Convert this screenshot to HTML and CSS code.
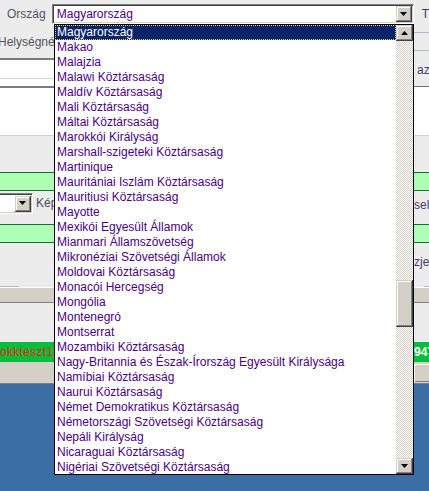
FILE: index.html
```html
<!DOCTYPE html>
<html lang="hu">
<head>
<meta charset="utf-8">
<title>Ország</title>
<link rel="stylesheet" href="styles.css">
</head>
<body>
<div class="window">
  <div class="toprow">
    <span class="lbl orszag">Ország</span>
    <div class="combo main">
      <span class="cval">Magyarország</span>
      <span class="dbtn"><svg width="7" height="4" viewBox="0 0 7 4"><polygon points="0,0 7,0 3.5,4" fill="#000"/></svg></span>
    </div>
    <span class="lbl tlbl">T</span>
  </div>

  <div class="upper">
    <div class="uleft">
      <div class="helyseg"><span class="lbl">Helységnév</span></div>
      <div class="box1"></div>
      <div class="box2"></div>
    </div>
    <div class="uright">
      <div class="rb1"></div>
      <div class="rb2"><span class="lbl">az</span></div>
      <div class="rb3"></div>
    </div>
  </div>

  <div class="gap1"></div>
  <div class="band"></div>

  <div class="split row190">
    <div class="lside">
      <div class="combo small">
        <span class="dbtn"><svg width="7" height="4" viewBox="0 0 7 4"><polygon points="0,0 7,0 3.5,4" fill="#000"/></svg></span>
      </div>
      <span class="lbl kep">Kép</span>
    </div>
    <span class="lbl rtxt">self</span>
  </div>

  <div class="band"></div>

  <div class="split row242">
    <span></span>
    <span class="lbl rtxt">zje</span>
  </div>

  <div class="line286"></div>
  <div class="bevelbar"></div>
  <div class="gap2"></div>

  <div class="status">
    <span class="red">okkteszt1</span>
    <span class="wht">947</span>
  </div>

  <div class="bottombar">
    <span class="rbtn"></span>
  </div>
</div>

<div class="listbox">
  <ul class="items">
    <li class="item sel">Magyarország</li>
    <li class="item">Makao</li>
    <li class="item">Malajzia</li>
    <li class="item">Malawi Köztársaság</li>
    <li class="item">Maldív Köztársaság</li>
    <li class="item">Mali Köztársaság</li>
    <li class="item">Máltai Köztársaság</li>
    <li class="item">Marokkói Királyság</li>
    <li class="item">Marshall-szigeteki Köztársaság</li>
    <li class="item">Martinique</li>
    <li class="item">Mauritániai Iszlám Köztársaság</li>
    <li class="item">Mauritiusi Köztársaság</li>
    <li class="item">Mayotte</li>
    <li class="item">Mexikói Egyesült Államok</li>
    <li class="item">Mianmari Államszövetség</li>
    <li class="item">Mikronéziai Szövetségi Államok</li>
    <li class="item">Moldovai Köztársaság</li>
    <li class="item">Monacói Hercegség</li>
    <li class="item">Mongólia</li>
    <li class="item">Montenegró</li>
    <li class="item">Montserrat</li>
    <li class="item">Mozambiki Köztársaság</li>
    <li class="item">Nagy-Britannia és Észak-Írország Egyesült Királysága</li>
    <li class="item">Namíbiai Köztársaság</li>
    <li class="item">Naurui Köztársaság</li>
    <li class="item">Német Demokratikus Köztársaság</li>
    <li class="item">Németországi Szövetségi Köztársaság</li>
    <li class="item">Nepáli Királyság</li>
    <li class="item">Nicaraguai Köztársaság</li>
    <li class="item">Nigériai Szövetségi Köztársaság</li>
  </ul>
  <div class="vscroll">
    <span class="sbtn"><svg width="7" height="4" viewBox="0 0 7 4"><polygon points="0,4 7,4 3.5,0" fill="#000"/></svg></span>
    <span class="track t1"></span>
    <span class="thumb"></span>
    <span class="track t2"></span>
    <span class="sbtn"><svg width="7" height="4" viewBox="0 0 7 4"><polygon points="0,0 7,0 3.5,4" fill="#000"/></svg></span>
  </div>
</div>
</body>
</html>
```

FILE: styles.css
```css
* { box-sizing: border-box; }

body {
  margin: 0;
  width: 429px;
  height: 491px;
  overflow: hidden;
  position: relative;
  background: #3a6ea5;
  font-family: "Liberation Sans", Arial, sans-serif;
  font-size: 12px;
}

.window {
  height: 384px;
  background: #ececec;
  overflow: hidden;
}

.lbl {
  color: #4a4a5c;
  line-height: 14px;
  white-space: nowrap;
}

/* top row */
.toprow {
  height: 32px;
  display: flex;
  align-items: flex-start;
  padding-left: 7px;
}
.orszag {
  width: 45px;
  margin-top: 7px;
  color: #555560;
}
.tlbl {
  margin-left: 8px;
  margin-top: 7px;
  color: #3c3c5a;
}

.combo {
  background: #fff;
  border: 1px solid;
  border-color: #808080 #fff #fff #808080;
  box-shadow: inset 1px 1px #404040, inset -1px -1px #d4d0c8;
  padding: 1px;
  display: flex;
  align-items: center;
  justify-content: space-between;
}
.combo.main {
  margin-top: 4px;
  width: 363px;
  height: 20px;
}
.cval {
  padding-left: 3px;
  color: #4b0082;
  line-height: 16px;
}
.dbtn, .sbtn {
  width: 16px;
  height: 16px;
  flex: none;
  background: #d4d0c8;
  box-shadow: inset -1px -1px #404040, inset 1px 1px #d4d0c8, inset -2px -2px #808080, inset 2px 2px #fff;
  display: flex;
  align-items: center;
  justify-content: center;
}
.dbtn svg, .sbtn svg { display: block; margin-left: -1px; margin-top: -1px; }

/* upper area (y 32-135) */
.upper {
  height: 104px;
  display: flex;
  justify-content: space-between;
}
.uleft { width: 54px; overflow: hidden; }
.helyseg {
  height: 26px;
  padding-top: 3px;
  overflow: hidden;
}
.helyseg .lbl { display: block; margin-left: -2px; color: #555560; }
.box1 {
  height: 28px;
  border-top: 2px solid #7c7c7c;
  background: linear-gradient(#fff 0 18px, #d6d6d6 18px 19px, #fff 19px);
}
.box2 {
  height: 50px;
  border-top: 2px solid #7c7c7c;
  border-bottom: 1px solid #cfcfcf;
  background: #fff;
}
.uright { width: 15px; overflow: hidden; }
.rb1 {
  height: 19px;
  border-top: 1px solid #b4b8cc;
  border-bottom: 1px solid #b4b8cc;
}
.rb2 {
  height: 35px;
  padding-top: 12px;
  padding-left: 3px;
}
.rb2 .lbl { color: #4a3a6a; }
.rb3 {
  height: 50px;
  border-top: 1px solid #707070;
  border-bottom: 1px solid #cfcfcf;
  background: #fff;
}

.gap1 { height: 36px; }

.band {
  height: 19px;
  background: #adffb4;
  border-top: 1px solid #0f6e3c;
  border-bottom: 1px solid #0f6e3c;
}

.split {
  display: flex;
  justify-content: space-between;
}
.row190 { height: 33px; }
.lside {
  width: 54px;
  display: flex;
  align-items: flex-start;
  overflow: hidden;
}
.combo.small {
  flex: none;
  margin-top: 2px;
  margin-left: -40px;
  width: 73px;
  height: 21px;
  justify-content: flex-end;
}
.kep { margin-left: 3px; margin-top: 5px; color: #4a4a5c; }
.rtxt {
  width: 15px;
  overflow: hidden;
  color: #4a3a6a;
}
.row190 .rtxt { margin-top: 7px; }
.row242 { height: 43px; }
.row242 .rtxt { margin-top: 12px; }

.line286 {
  height: 1px;
  background: linear-gradient(to right, #b6b6d6 0 19px, transparent 19px 424px, #b6b6d6 424px);
}
.bevelbar {
  height: 16px;
  background: #d4d0c8;
  border-top: 1px solid #fff;
  border-bottom: 1px solid #808080;
}
.gap2 { height: 39px; }

.status {
  height: 20px;
  background: #00bf3c;
  display: flex;
  justify-content: space-between;
  align-items: center;
  font-size: 12px;
}
.red {
  width: 54px;
  overflow: hidden;
  color: #ff1a1a;
  letter-spacing: 0.3px;
  white-space: nowrap;
}
.wht {
  width: 15px;
  overflow: hidden;
  color: #fff;
  font-weight: bold;
  white-space: nowrap;
}

.bottombar {
  height: 22px;
  background: #d4d0c8;
  border-bottom: 1px solid #808080;
  display: flex;
  justify-content: flex-end;
  padding-top: 2px;
}
.rbtn {
  width: 15px;
  height: 18px;
  box-shadow: inset 1px 1px #fff, inset 0 -1px #808080;
}

/* dropdown list overlay */
.listbox {
  position: absolute;
  left: 54px;
  top: 24px;
  width: 360px;
  height: 451px;
  border: 1px solid #000;
  background: #fff;
  display: flex;
}
.items {
  list-style: none;
  margin: 0;
  padding: 0;
  flex: 1;
  min-width: 0;
  overflow: hidden;
}
.item {
  height: 15px;
  line-height: 15px;
  padding-left: 2px;
  color: #4b0082;
  white-space: nowrap;
}
.item.sel {
  background: #0a246a;
  color: #fff;
  outline: 1px dotted #e8cc70;
  outline-offset: -1px;
}
.vscroll {
  width: 17px;
  flex: none;
  display: flex;
  flex-direction: column;
}
.vscroll .sbtn { width: 17px; }
.track {
  background: repeating-conic-gradient(#d4d0c8 0 25%, #fff 0 50%) 0 0 / 2px 2px;
}
.t1 { height: 239px; }
.t2 { height: 131px; }
.thumb {
  height: 47px;
  background: #d4d0c8;
  box-shadow: inset -1px -1px #404040, inset 1px 1px #d4d0c8, inset -2px -2px #808080, inset 2px 2px #fff;
}
```
